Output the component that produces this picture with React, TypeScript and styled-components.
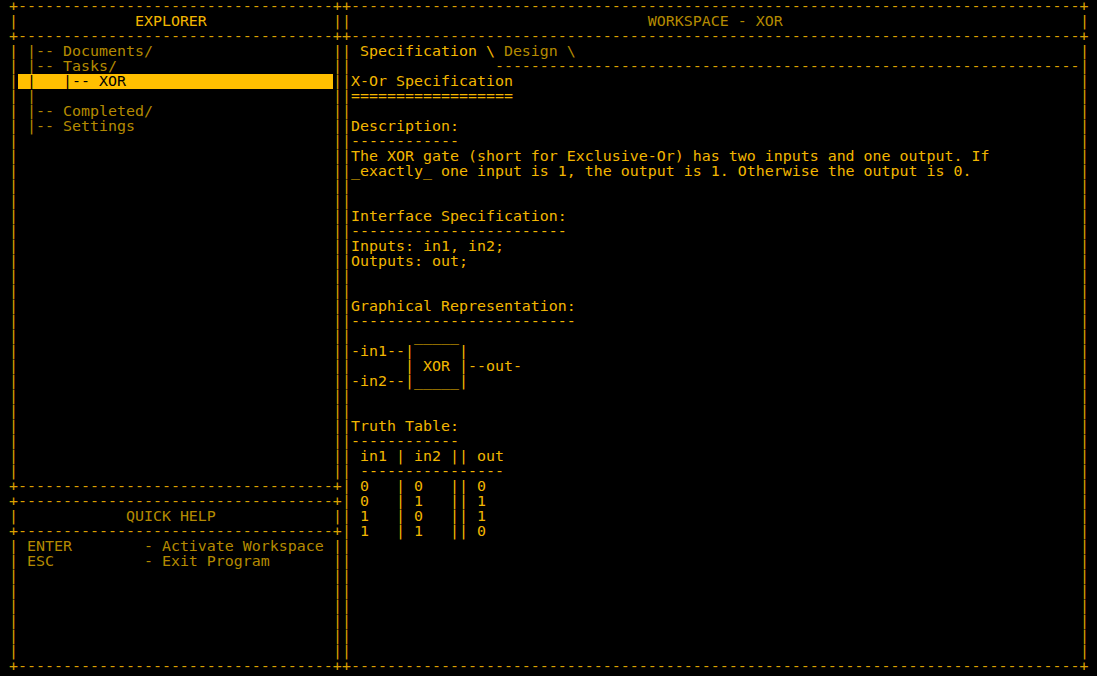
import { createGlobalStyle } from 'styled-components'
import styled from 'styled-components'

const CHAR = 9
const ROW = 15

type Tone = 'border' | 'bright' | 'dim'

const tones: Record<Tone, string> = {
  border: '#dba100',
  bright: '#f2b600',
  dim: '#b48a00',
}

const GlobalStyle = createGlobalStyle`
  html, body {
    margin: 0;
    padding: 0;
    background: #000;
    overflow: hidden;
  }
`

const Screen = styled.div`
  display: flex;
  margin-top: -1px;
  padding-left: ${CHAR}px;
  width: 1097px;
  height: 677px;
  box-sizing: border-box;
  background: #000;
  font-family: "DejaVu Sans Mono", "Liberation Mono", monospace;
  font-size: 14.95px;
  line-height: ${ROW}px;
`

const Panel = styled.div<{ $cols: number }>`
  display: flex;
  flex-direction: column;
  width: ${p => p.$cols * CHAR}px;
`

const Line = styled.div`
  display: flex;
  height: ${ROW}px;
  white-space: pre;
`

const Ink = styled.span<{ $tone: Tone }>`
  color: ${p => tones[p.$tone]};
`

const Body = styled.span<{ $cols: number; $selected?: boolean }>`
  display: inline-block;
  width: ${p => p.$cols * CHAR}px;
  height: ${ROW}px;
  background: ${p => (p.$selected ? '#ffbf00' : 'transparent')};
  color: ${p => (p.$selected ? '#000' : tones.bright)};
`

type Seg = { text: string; tone?: Tone }

const Rule = ({ cols }: { cols: number }) => (
  <Line>
    <Ink $tone="border">{'+' + '-'.repeat(cols - 2) + '+'}</Ink>
  </Line>
)

const Row = ({ cols, segs = [], selected }: { cols: number; segs?: Seg[]; selected?: boolean }) => (
  <Line>
    <Ink $tone="border">|</Ink>
    <Body $cols={cols - 2} $selected={selected}>
      {segs.map((s, i) =>
        selected ? <span key={i}>{s.text}</span> : <Ink key={i} $tone={s.tone ?? 'bright'}>{s.text}</Ink>
      )}
    </Body>
    <Ink $tone="border">|</Ink>
  </Line>
)

const Title = ({ cols, text, tone }: { cols: number; text: string; tone: Tone }) => {
  const inner = cols - 2
  const left = Math.floor((inner - text.length) / 2)
  return <Row cols={cols} segs={[{ text: ' '.repeat(left) + text, tone }]} />
}

const Blank = ({ cols, count }: { cols: number; count: number }) => (
  <>
    {Array.from({ length: count }, (_, i) => (
      <Row key={i} cols={cols} />
    ))}
  </>
)

const LEFT = 37
const RIGHT = 83

const tree: Seg[][] = [
  [{ text: ' |-- Documents/', tone: 'dim' }],
  [{ text: ' |-- Tasks/', tone: 'dim' }],
]

const treeRest: Seg[][] = [
  [{ text: ' |', tone: 'dim' }],
  [{ text: ' |-- Completed/', tone: 'dim' }],
  [{ text: ' |-- Settings', tone: 'dim' }],
]

const help: string[] = [
  ' ENTER        - Activate Workspace',
  ' ESC          - Exit Program',
]

const spec: string[] = [
  'X-Or Specification',
  '==================',
  '',
  'Description:',
  '------------',
  'The XOR gate (short for Exclusive-Or) has two inputs and one output. If',
  '_exactly_ one input is 1, the output is 1. Otherwise the output is 0.',
  '',
  '',
  'Interface Specification:',
  '------------------------',
  'Inputs: in1, in2;',
  'Outputs: out;',
  '',
  '',
  'Graphical Representation:',
  '-------------------------',
  '       _____',
  '-in1--|     |',
  '      | XOR |--out-',
  '-in2--|_____|',
  '',
  '',
  'Truth Table:',
  '------------',
  ' in1 | in2 || out',
  ' ----------------',
  ' 0   | 0   || 0',
  ' 0   | 1   || 1',
  ' 1   | 0   || 1',
  ' 1   | 1   || 0',
]

const Explorer = () => (
  <Panel $cols={LEFT}>
    <Rule cols={LEFT} />
    <Title cols={LEFT} text="EXPLORER" tone="bright" />
    <Rule cols={LEFT} />
    {tree.map((segs, i) => (
      <Row key={i} cols={LEFT} segs={segs} />
    ))}
    <Row cols={LEFT} selected segs={[{ text: ' |   |-- XOR' }]} />
    {treeRest.map((segs, i) => (
      <Row key={i} cols={LEFT} segs={segs} />
    ))}
    <Blank cols={LEFT} count={23} />
    <Rule cols={LEFT} />
    <Rule cols={LEFT} />
    <Title cols={LEFT} text="QUICK HELP" tone="dim" />
    <Rule cols={LEFT} />
    {help.map((h, i) => (
      <Row key={i} cols={LEFT} segs={[{ text: h, tone: 'dim' }]} />
    ))}
    <Blank cols={LEFT} count={6} />
    <Rule cols={LEFT} />
  </Panel>
)

const Workspace = () => (
  <Panel $cols={RIGHT}>
    <Rule cols={RIGHT} />
    <Title cols={RIGHT} text="WORKSPACE - XOR" tone="dim" />
    <Rule cols={RIGHT} />
    <Row
      cols={RIGHT}
      segs={[
        { text: ' Specification \\', tone: 'bright' },
        { text: ' Design \\', tone: 'dim' },
      ]}
    />
    <Row cols={RIGHT} segs={[{ text: ' '.repeat(16) + '-'.repeat(65), tone: 'border' }]} />
    {spec.map((s, i) => (
      <Row key={i} cols={RIGHT} segs={[{ text: s }]} />
    ))}
    <Blank cols={RIGHT} count={8} />
    <Rule cols={RIGHT} />
  </Panel>
)

export default function App() {
  return (
    <>
      <GlobalStyle />
      <Screen>
        <Explorer />
        <Workspace />
      </Screen>
    </>
  )
}
